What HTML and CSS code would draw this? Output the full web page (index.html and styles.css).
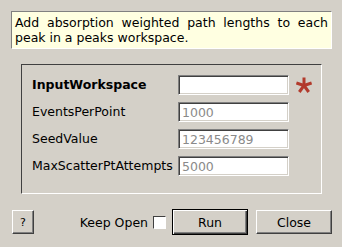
FILE: index.html
```html
<!DOCTYPE html>
<html lang="en">
<head>
    <meta charset="UTF-8">
    <title>Input Dialog</title>
    <link rel="stylesheet" href="styles.css">
</head>
<body>
    <div class="dialog">
        <p class="desc">Add absorption weighted path lengths to each peak in a peaks workspace.</p>

        <div class="group">
            <label class="lbl bold">InputWorkspace</label>
            <input class="field" type="text" value="">
            <svg class="star" width="16" height="16" viewBox="0 0 16 16">
                <g stroke="#b23a2c" stroke-width="3" stroke-linecap="butt">
                    <line x1="8" y1="8.5" x2="8" y2="0.5"/>
                    <line x1="8" y1="8.5" x2="15.6" y2="6"/>
                    <line x1="8" y1="8.5" x2="12.7" y2="15"/>
                    <line x1="8" y1="8.5" x2="3.3" y2="15"/>
                    <line x1="8" y1="8.5" x2="0.4" y2="6"/>
                </g>
            </svg>

            <label class="lbl">EventsPerPoint</label>
            <input class="field" type="text" placeholder="1000">
            <span></span>

            <label class="lbl">SeedValue</label>
            <input class="field" type="text" placeholder="123456789">
            <span></span>

            <label class="lbl">MaxScatterPtAttempts</label>
            <input class="field" type="text" placeholder="5000">
            <span></span>
        </div>

        <div class="buttons">
            <button class="btn help">?</button>
            <span class="keep">Keep Open</span>
            <span class="check"></span>
            <button class="btn run">Run</button>
            <button class="btn close">Close</button>
        </div>
    </div>
</body>
</html>
```

FILE: styles.css
```css
body {
    margin: 0;
    background-color: #d4d0c8;
    font-family: "DejaVu Sans", sans-serif;
    font-size: 12.5px;
    color: #000;
}
.dialog {
    padding: 11px 10px 0 11px;
}
.desc {
    margin: 0;
    width: 321px;
    height: 38px;
    box-sizing: border-box;
    padding: 3px 3px;
    background-color: #ffffe1;
    border: 1px solid;
    border-color: #808080 #fff #fff #808080;
    text-align: justify;
    line-height: 15px;
}
.group {
    margin: 15px 0 0 10px;
    width: 301px;
    height: 130px;
    box-sizing: border-box;
    border: 1px solid;
    border-color: #404040 #fff #fff #404040;
    padding: 10px 0 0 10px;
    display: grid;
    grid-template-columns: 146px 111px 30px;
    grid-auto-rows: 20px;
    row-gap: 7px;
    align-items: center;
}
.lbl {
    line-height: 20px;
}
.bold {
    font-weight: bold;
}
.field {
    width: 111px;
    height: 20px;
    box-sizing: border-box;
    margin: 0;
    padding: 0 3px;
    font-family: "DejaVu Sans", sans-serif;
    font-size: 12.5px;
    background-color: #fff;
    border: 1px solid;
    border-color: #808080 #fff #fff #808080;
    box-shadow: inset 1px 1px #404040, inset -1px -1px #d4d0c8;
    outline: none;
}
.field::placeholder {
    color: #8a8a8a;
}
.star {
    margin-left: 7px;
}
.buttons {
    margin-top: 15px;
    height: 26px;
    display: flex;
    align-items: center;
}
.btn {
    height: 24px;
    box-sizing: border-box;
    margin: 0;
    padding: 0;
    font-family: "DejaVu Sans", sans-serif;
    font-size: 12.5px;
    color: #000;
    background-color: #d4d0c8;
    border: 1px solid;
    border-color: #fff #404040 #404040 #fff;
    box-shadow: inset -1px -1px #808080;
}
.help {
    width: 22px;
    margin-left: 1px;
    font-size: 11px;
}
.keep {
    margin-left: auto;
}
.check {
    width: 13px;
    height: 13px;
    box-sizing: border-box;
    margin: 0 6px 0 5px;
    background-color: #fff;
    border: 1px solid;
    border-color: #404040 #fff #fff #404040;
}
.run {
    width: 76px;
    height: 26px;
    border: 1px solid #000;
    box-shadow: inset 1px 1px #fff, inset -1px -1px #404040, inset -2px -2px #808080;
}
.close {
    width: 76px;
    margin-left: 8px;
}
```
